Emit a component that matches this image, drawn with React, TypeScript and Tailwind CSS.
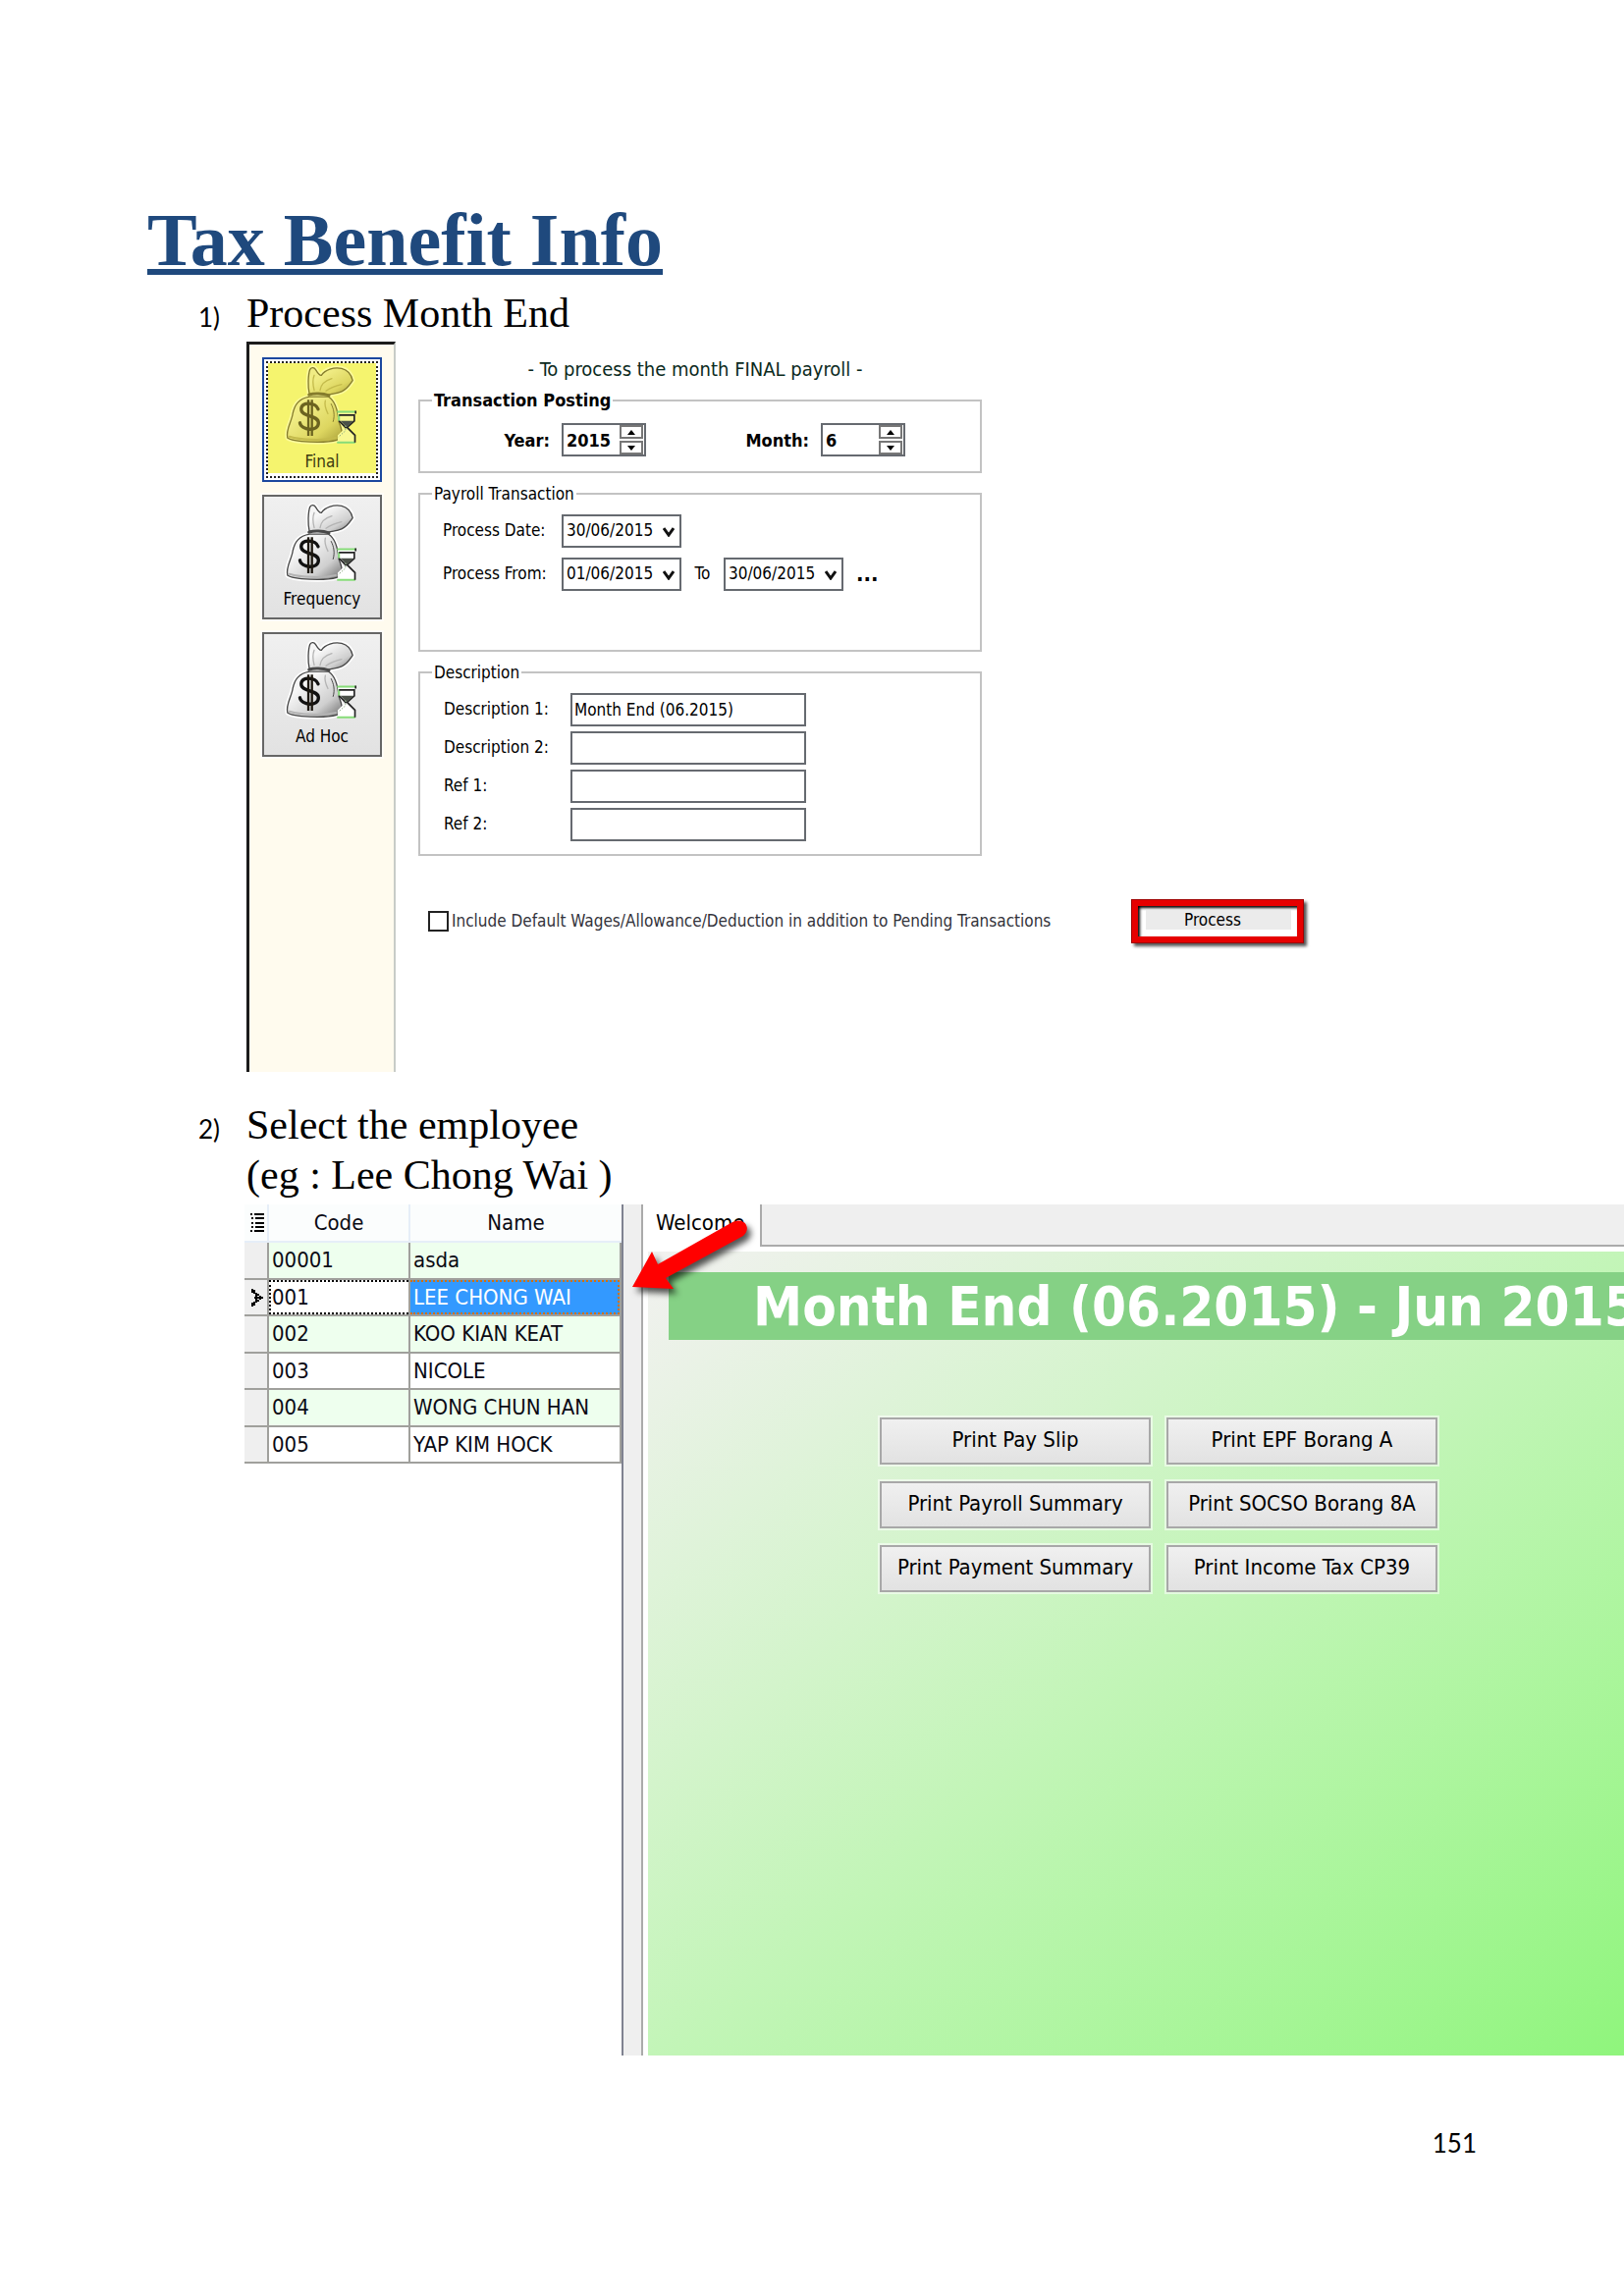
import React from "react";

const ui = "font-['DejaVu_Sans_Condensed','Noto_Sans',sans-serif]";

function MoneyBag({ tinted = false }: { tinted?: boolean }) {
  const line = tinted ? "#857c2c" : "#484848";
  const soft = tinted ? "#c4bb4c" : "#b4b4b4";
  const halo = tinted ? "#fbfa9a" : "#ffffff";
  const id = tinted ? "bag-yellow" : "bag-grey";
  return (
    <svg viewBox="150 515 240 250" className="h-[83px] w-[80px]" aria-hidden="true" fill="none">
      <defs>
        <linearGradient id={id} x1="0" y1="0" x2="1" y2="1">
          <stop offset="0.3" stopColor={tinted ? "#f0ec84" : "#f6f6f6"} />
          <stop offset="0.7" stopColor={tinted ? "#ddd660" : "#cfcfcf"} />
          <stop offset="1" stopColor={tinted ? "#a89f38" : "#6e6e6e"} />
        </linearGradient>
      </defs>
      <g stroke={halo} strokeWidth="14" strokeLinejoin="round">
        <path d="M231 602C226 580 227 545 233 528C238 520 246 522 250 528C256 538 262 548 268 546C280 528 305 521 330 525C350 530 360 545 364 562C354 576 348 588 330 596C314 603 300 602 290 606Z" />
        <path d="M232 612C198 618 186 636 180 664C177 688 158 712 164 738C180 752 280 755 315 745C338 735 332 715 322 690C318 650 310 624 290 612Z" />
      </g>
      <g fill={`url(#${id})`} stroke={line} strokeWidth="4" strokeLinejoin="round">
        <path d="M231 602C226 580 227 545 233 528C238 520 246 522 250 528C256 538 262 548 268 546C280 528 305 521 330 525C350 530 360 545 364 562C354 576 348 588 330 596C314 603 300 602 290 606Z" />
        <path d="M232 612C198 618 186 636 180 664C177 688 158 712 164 738C180 752 280 755 315 745C338 735 332 715 322 690C318 650 310 624 290 612Z" />
      </g>
      <path d="M230 606C245 600 272 601 291 608" stroke={line} strokeWidth="9" strokeLinecap="round" />
      <path d="M246 592C240 570 242 556 246 546M264 592C266 576 280 562 300 556M282 594C296 584 312 578 330 574M280 624C276 640 282 652 288 664" stroke={soft} strokeWidth="4" strokeLinecap="round" />
      <path d="M298 634C306 650 310 668 304 688" stroke={line} strokeWidth="3" strokeLinecap="round" />
      <path d="M170 734C205 744 270 748 312 738" stroke={soft} strokeWidth="6" strokeLinecap="round" />
      <path d="M258 650C252 630 207 624 206 650C206 676 259 666 259 692C259 720 206 716 202 692" stroke={tinted ? "#6b6320" : "#111111"} strokeWidth="10" strokeLinecap="round" />
      <path d="M228 621V732M239 621V732" stroke={tinted ? "#6b6320" : "#1d1810"} strokeWidth="7" />
      <path d="M318 660H372V684L350 706L372 730V754H318V730L342 706L320 684Z" fill={tinted ? "#f8f892" : "#ffffff"} />
      <path d="M316 658H374M316 752H372M322 666V686" stroke="#86dc78" strokeWidth="6" />
      <path d="M373 655V664M322 668H369V686L347 706L371 730V752M322 686L344 708" stroke="#222222" strokeWidth="5" />
      <path d="M326 686H366L346 706Z" fill="#4a5048" />
      <path d="M342 700V716L320 736" stroke="#8fae86" strokeWidth="3" strokeDasharray="5 4" />
    </svg>
  );
}

function ModeButton({ label }: { label: string }) {
  return (
    <button className="flex h-[127px] w-[122px] flex-col items-center justify-end gap-[3px] border-2 border-[#666] bg-linear-to-b from-[#f0f0f0] to-[#e2e2e2] pb-[7px] text-[17px] leading-6 text-black shadow-[0_0_0_2px_#fff8]">
      <MoneyBag />
      {label}
    </button>
  );
}

function FinalButton() {
  return (
    <button className="h-[127px] w-[122px] border-2 border-[#1c479f] bg-white p-[2px] text-[17px] leading-6 text-[#3d3a10]">
      <span className="flex h-full flex-col border-2 border-dotted border-[#222] pb-[3px]">
        <span className="flex flex-1 flex-col items-center justify-end gap-[3px] bg-[#f5f46e]">
          <MoneyBag tinted />
          Final
        </span>
      </span>
    </button>
  );
}

function Spinner({ id, value }: { id: string; value: string }) {
  const arrow = "flex h-[14px] w-[24px] items-center justify-center border-2 border-[#777] bg-white";
  return (
    <div className="flex h-[34px] w-[86px] items-center border-2 border-[#666a70] bg-white pr-px">
      <input id={id} defaultValue={value} className="w-full min-w-0 flex-1 pl-[3px] text-[18px] font-bold outline-none" />
      <div className="flex flex-col gap-[2px]">
        <button aria-label={`${id} up`} className={arrow}>
          <svg viewBox="0 0 8 5" className="h-[5px] w-[8px]"><path d="M4 0L8 5H0Z" /></svg>
        </button>
        <button aria-label={`${id} down`} className={arrow}>
          <svg viewBox="0 0 8 5" className="h-[5px] w-[8px]"><path d="M0 0H8L4 5Z" /></svg>
        </button>
      </div>
    </div>
  );
}

function DateSelect({ id, value }: { id: string; value: string }) {
  return (
    <div className="relative w-[122px]">
      <select id={id} className="h-[34px] w-full appearance-none border-2 border-[#666a70] bg-white pl-[3px] text-[17px] text-black">
        <option>{value}</option>
      </select>
      <svg viewBox="0 0 12 10" className="pointer-events-none absolute top-[13px] right-[7px] h-[10px] w-[12px]" fill="none">
        <path d="M1 1L6 8L11 1" stroke="#111" strokeWidth="3" />
      </svg>
    </div>
  );
}

const legend = "ml-[12px] h-6 px-[2px] leading-6";

function PayrollForm() {
  const fields = [
    ["Description 1:", "Month End (06.2015)"],
    ["Description 2:", ""],
    ["Ref 1:", ""],
    ["Ref 2:", ""],
  ];
  return (
    <div className="ml-[23px] flex w-[902px] max-w-full flex-col text-[17px]">
      <p className="mt-[16px] w-[574px] pr-[10px] text-center text-[20px] leading-6 text-[#0b2a20]">- To process the month FINAL payroll -</p>
      <fieldset className="mt-[8px] min-h-[86px] w-[574px] border-2 border-[#c3c3c3]">
        <legend className={`${legend} text-[18px] font-bold`}>Transaction Posting</legend>
        <div className="flex items-center pt-[11px] text-[18px] font-bold">
          <label htmlFor="year" className="w-[144px] pr-[12px] text-right">Year:</label>
          <Spinner id="year" value="2015" />
          <label htmlFor="month" className="w-[178px] pr-[12px] text-right">Month:</label>
          <Spinner id="month" value="6" />
        </div>
      </fieldset>
      <fieldset className="mt-[9px] min-h-[173px] w-[574px] border-2 border-[#c3c3c3]">
        <legend className={legend}>Payroll Transaction</legend>
        <div className="flex flex-col gap-[10px] pt-[9px]">
          <div className="flex items-center">
            <label htmlFor="pdate" className="w-[144px] pl-[23px]">Process Date:</label>
            <DateSelect id="pdate" value="30/06/2015" />
          </div>
          <div className="flex items-center">
            <label htmlFor="pfrom" className="w-[144px] pl-[23px]">Process From:</label>
            <DateSelect id="pfrom" value="01/06/2015" />
            <label htmlFor="pto" className="w-[43px] text-center">To</label>
            <DateSelect id="pto" value="30/06/2015" />
            <button aria-label="More" className="ml-[13px] text-[22px] leading-8 font-bold">...</button>
          </div>
        </div>
      </fieldset>
      <fieldset className="mt-[9px] min-h-[199px] w-[574px] border-2 border-[#c3c3c3]">
        <legend className={legend}>Description</legend>
        <div className="flex flex-col gap-[5px] pt-[9px]">
          {fields.map(([name, value], i) => (
            <div key={name} className="flex items-center">
              <label htmlFor={`f${i}`} className="w-[153px] pl-6">{name}</label>
              <input id={`f${i}`} defaultValue={value} className="h-[34px] w-[240px] border-2 border-[#666a70] bg-white pl-[2px] outline-none" />
            </div>
          ))}
        </div>
      </fieldset>
      <div className="mt-[44px] flex items-center pl-[10px]">
        <input id="include" type="checkbox" className="size-[21px] appearance-none border-2 border-[#222] bg-white" />
        <label htmlFor="include" className="pl-[3px] text-[17px] text-[#33333b]">
          Include Default Wages/Allowance/Deduction in addition to Pending Transactions
        </label>
        <button className="ml-auto h-[45px] w-[176px] border-[7px] border-[#e60000] bg-white pt-[2px] pr-[6px] pb-[5px] pl-[8px] shadow-[3px_3px_3px_#000a,inset_2px_2px_3px_#000] outline-1 -outline-offset-1 outline-[#a00000]">
          <span className="block bg-[#ebebeb] pr-[12px] leading-5">Process</span>
        </button>
      </div>
    </div>
  );
}

const employees = [
  ["00001", "asda"],
  ["001", "LEE CHONG WAI"],
  ["002", "KOO KIAN KEAT"],
  ["003", "NICOLE"],
  ["004", "WONG CHUN HAN"],
  ["005", "YAP KIM HOCK"],
];

function EmployeeTable() {
  return (
    <table className="w-full table-fixed border-separate border-spacing-0 text-left text-[22px] leading-7 text-[#0a0a14]">
      <colgroup>
        <col className="w-[25px]" />
        <col className="w-[144px]" />
        <col />
      </colgroup>
      <thead>
        <tr className="h-[39px] bg-[#fbfdfd]">
          <th className="border-r-2 border-b-2 border-[#e6eef8]">
            <svg viewBox="0 0 14 20" className="ml-[6px] h-[20px] w-[14px]" aria-label="Columns">
              <path d="M0 1H2M4 1H14M1 5H3M5 5H14M1 10H3M5 10H14M1 14H3M5 14H14M0 18H2M4 18H14" stroke="#000" strokeWidth="2" />
            </svg>
          </th>
          <th className="border-r-2 border-b-2 border-[#e6eef8] text-center font-normal">Code</th>
          <th className="border-b-2 border-[#e6eef8] text-center font-normal">Name</th>
        </tr>
      </thead>
      <tbody>
        {employees.map(([code, name]) => {
          const on = code === "001";
          return (
            <tr key={code} className="odd:h-[38px] odd:bg-[#eeffee] even:h-[37px] even:bg-white">
              <td className="border-r-2 border-b-2 border-[#a0a09c] bg-[#efefef]">
                {on && (
                  <svg viewBox="0 0 12 18" className="ml-[7px] h-[18px] w-[12px]" fill="none">
                    <path d="M1 0V4M1 14V18M3 1V5M3 13V17M5 4V14M7 5V7M7 11V13M9 7V11M3 9H8M11 8V10" stroke="#000" strokeWidth="2" />
                  </svg>
                )}
              </td>
              <td className="border-r-2 border-b-2 border-[#a0a09c] p-0">
                <div className={on ? "border-2 border-r-0 border-dotted border-black pl-px leading-[31px]" : "pl-[3px]"}>{code}</div>
              </td>
              <td className="border-r-2 border-b-2 border-[#a0a09c] p-0">
                <div className={on ? "border-2 border-l-0 border-dotted border-[#d2700f] bg-[#3399ff] pl-[3px] leading-[31px] text-white" : "pl-[3px]"}>{name}</div>
              </td>
            </tr>
          );
        })}
      </tbody>
    </table>
  );
}

function Arrow() {
  return (
    <svg viewBox="0 0 130 90" className="pointer-events-none absolute top-[8px] left-[5px] h-[90px] w-[130px] drop-shadow-[4px_5px_3px_#000a]" aria-hidden="true">
      <path d="M4 76L24 40L30 53L106 10C118 4 126 16 117 24L38 67L46 78Z" fill="#ff0000" />
    </svg>
  );
}

const reports = [
  "Print Pay Slip",
  "Print EPF Borang A",
  "Print Payroll Summary",
  "Print SOCSO Borang 8A",
  "Print Payment Summary",
  "Print Income Tax CP39",
];

function WelcomePane() {
  return (
    <div className="flex min-w-0 flex-1 flex-col">
      <div className="flex h-[43px] text-[22px]">
        <button className="w-[119px] bg-white pb-[6px] pl-[13px] text-left leading-7">Welcome</button>
        <div className="flex-1 border-b-2 border-l-2 border-[#aaaaaa] bg-[#efefef]" />
      </div>
      <div className="mt-[5px] ml-[5px] flex-1 bg-linear-to-br from-[#f2f1f0] via-[#c3f5b8] to-[#8ff57c] pt-[21px]">
        <h2 className="ml-[21px] h-[69px] overflow-hidden bg-[#85d185] pl-[86px] text-[56px] leading-[69px] font-bold whitespace-nowrap text-white">
          Month End (06.2015) - Jun 2015
        </h2>
        <div className="mt-[79px] ml-[236px] grid w-[568px] grid-cols-2 gap-x-[16px] gap-y-[17px]">
          {reports.map((r) => (
            <button key={r} className="h-[48px] border-2 border-[#a8a8a8] bg-linear-to-b from-[#f0f0f0] to-[#e2e2e2] pb-[4px] text-[22px] whitespace-nowrap text-black shadow-[0_0_0_2px_#fff8]">
              {r}
            </button>
          ))}
        </div>
      </div>
    </div>
  );
}

function Step({ n, children }: { n: number; children: React.ReactNode }) {
  return (
    <div className="flex items-baseline pl-[202px] text-[42px] leading-[51px]">
      <span className="w-[49px] font-['Lato',sans-serif] text-[26px] leading-8">{n})</span>
      <h2>{children}</h2>
    </div>
  );
}

export default function App() {
  return (
    <main className="overflow-x-hidden bg-white pt-[202px] pb-[120px] font-['Liberation_Serif',serif] text-black">
      <h1 className="pl-[150px] text-[76px] leading-[84px] font-bold text-[#1f497d]">
        <span className="underline decoration-[6px] underline-offset-[4px] [text-decoration-skip-ink:none]">Tax Benefit Info</span>
      </h1>
      <section className="mt-[8px]">
        <Step n={1}>Process Month End</Step>
        <div className={`mt-[3px] ml-[251px] flex min-h-[744px] ${ui}`}>
          <nav className="flex w-[152px] shrink-0 flex-col gap-[13px] border-t-3 border-r-2 border-l-3 border-t-[#1c1c1c] border-r-[#c8ccc8] border-l-[#1c1c1c] bg-[#fffbee] p-[13px]">
            <FinalButton />
            <ModeButton label="Frequency" />
            <ModeButton label="Ad Hoc" />
          </nav>
          <PayrollForm />
        </div>
      </section>
      <section className="mt-[29px]">
        <Step n={2}>
          Select the employee
          <br />
          (eg : Lee Chong Wai )
        </Step>
        <div className={`mt-[4px] ml-[249px] flex min-h-[867px] ${ui}`}>
          <div className="w-[384px] shrink-0">
            <EmployeeTable />
          </div>
          <div className="relative w-[22px] shrink-0 border-r-2 border-l-2 border-r-[#aaaaaa] border-l-[#7f8290] bg-[#efefef]">
            <Arrow />
          </div>
          <WelcomePane />
        </div>
      </section>
      <footer className="mt-[73px] pr-[150px] text-right font-['Lato',sans-serif] text-[26px] leading-8">151</footer>
    </main>
  );
}
